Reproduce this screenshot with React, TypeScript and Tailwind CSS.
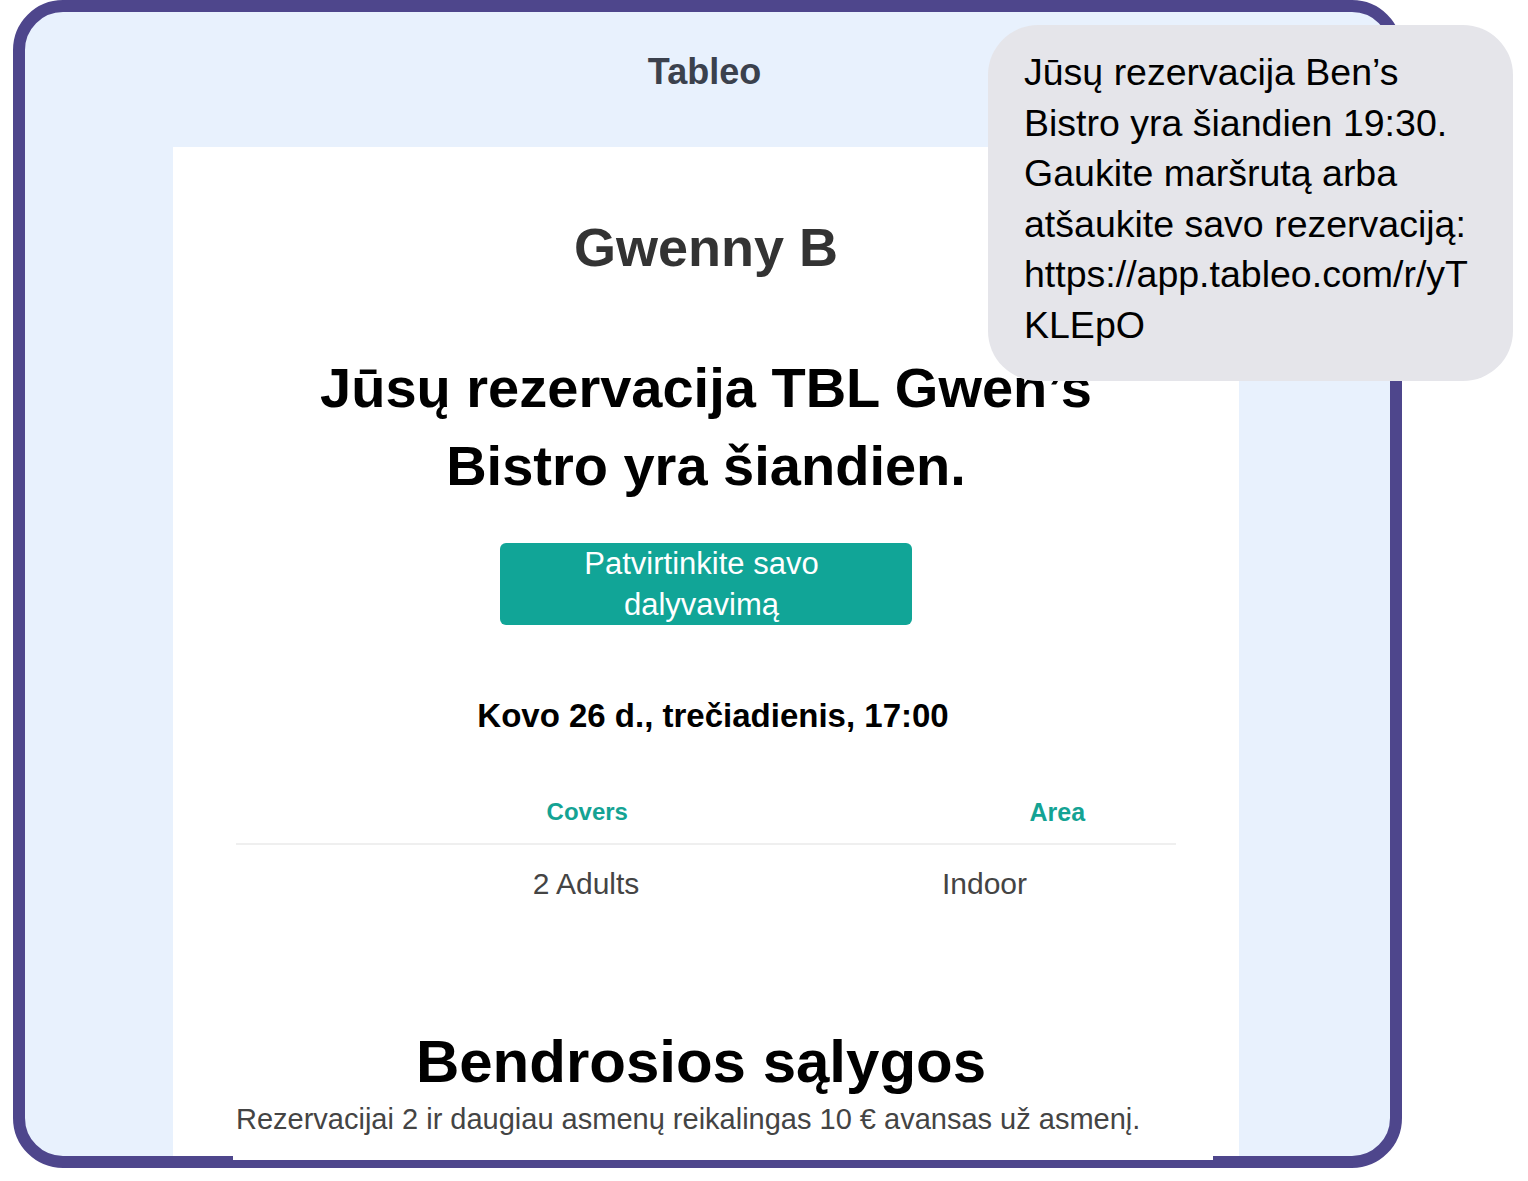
export default function App() {
  const smsLines = [
    "Jūsų rezervacija Ben’s",
    "Bistro yra šiandien 19:30.",
    "Gaukite maršrutą arba",
    "atšaukite savo rezervaciją:",
    "https://app.tableo.com/r/yT",
    "KLEpO",
  ];

  return (
    <div className="relative h-[1181px] w-[1528px] overflow-hidden bg-white font-['Liberation_Sans',Arial,sans-serif]">
      {/* phone-ish email frame */}
      <div className="ml-[13px] h-[1168px] w-[1389px] overflow-hidden rounded-[50px] border-[12px] border-[#4e468c] bg-[#e8f1fd]">
        <div className="flex h-[135px] justify-center pr-[6px] pt-[40px]">
          <p className="text-[36px] font-bold leading-[40px] text-[#3b414d]">
            Tableo
          </p>
        </div>

        <div className="ml-[148px] flex h-[1100px] w-[1066px] flex-col items-center bg-white">
          <h2 className="mt-[68px] text-[54px] font-bold leading-[64px] text-[#333333]">
            Gwenny B
          </h2>

          <h1 className="mt-[70px] text-center text-[56px] font-bold leading-[78px] text-black">
            Jūsų rezervacija TBL Gwen’s
            <br />
            Bistro yra šiandien.
          </h1>

          <button className="mt-[38px] h-[82px] w-[412px] rounded-[6px] bg-[#11a597] pr-[9px] text-center text-[31px] leading-[41px] text-white">
            Patvirtinkite savo
            <br />
            dalyvavimą
          </button>

          <p className="mt-[71px] ml-[14px] text-[33px] font-bold leading-[40px] text-black">
            Kovo 26 d., trečiadienis, 17:00
          </p>

          <div className="mt-[61px] w-[940px]">
            <div className="flex text-[24px] font-bold leading-[30px] text-[#14a394]">
              <span className="w-[704px] text-center">Covers</span>
              <span className="w-[238px] text-center text-[25px]">Area</span>
            </div>
            <div className="mt-[16px] h-[2px] bg-[#efefef]" />
            <div className="mt-[21px] flex text-[30px] leading-[36px] text-[#444444]">
              <span className="w-[700px] text-center">2 Adults</span>
              <span className="w-[97px] whitespace-nowrap text-center">
                Indoor
              </span>
            </div>
          </div>

          <div className="mt-[126px] w-[940px]">
            <h3 className="ml-[-10px] text-center text-[60px] font-bold leading-[68px] text-black">
              Bendrosios sąlygos
            </h3>
            <p className="mt-[5px] whitespace-nowrap text-[29px] leading-[36px] text-[#444444]">
              Rezervacijai 2 ir daugiau asmenų reikalingas 10 € avansas už
              asmenį.
            </p>
          </div>
        </div>
      </div>

      {/* white card edge spilling over the frame */}
      <div className="absolute left-[233px] top-[1155px] h-[5px] w-[980px] bg-white" />

      {/* SMS bubble */}
      <div className="absolute left-[988px] top-[25px] h-[356px] w-[525px] rounded-[50px] bg-[#e5e5ea] pl-[36px] pt-[22px] text-[37.5px] leading-[50.6px] text-black">
        {smsLines.map((line) => (
          <p key={line} className="whitespace-nowrap">
            {line}
          </p>
        ))}
      </div>
    </div>
  );
}
